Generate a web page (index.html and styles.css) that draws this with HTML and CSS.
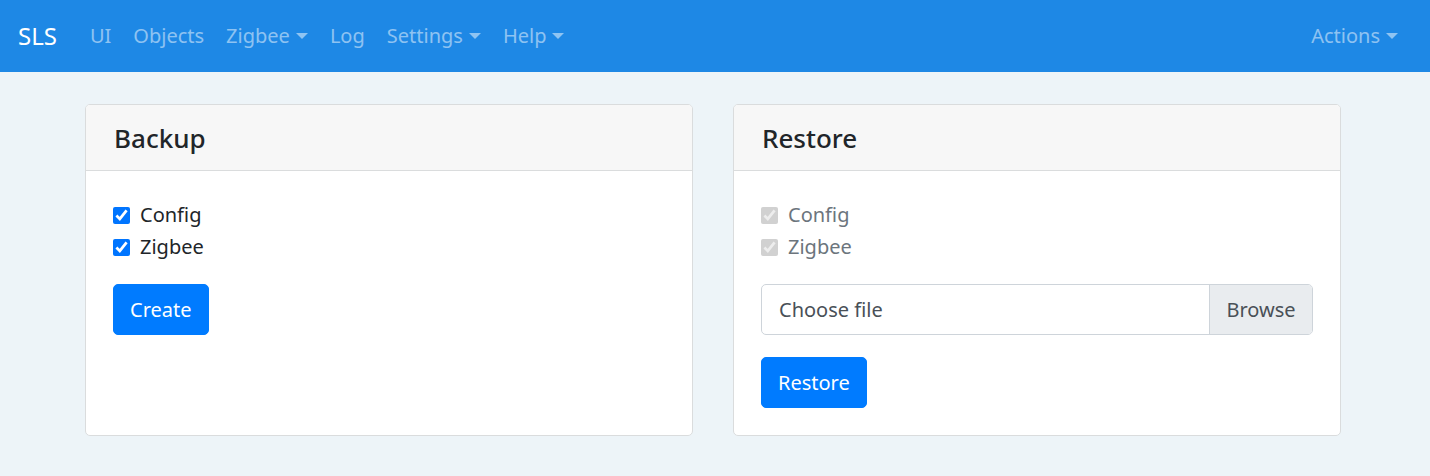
FILE: index.html
```html
<!DOCTYPE html>
<html lang="en">
<head>
<meta charset="utf-8">
<title>SLS Backup</title>
<link rel="stylesheet" href="styles.css">
</head>
<body>
<nav class="navbar">
  <a class="brand" href="#">SLS</a>
  <ul class="nav">
    <li><a class="nav-link" href="#">UI</a></li>
    <li><a class="nav-link" href="#">Objects</a></li>
    <li><a class="nav-link dropdown" href="#">Zigbee</a></li>
    <li><a class="nav-link" href="#">Log</a></li>
    <li><a class="nav-link dropdown" href="#">Settings</a></li>
    <li><a class="nav-link dropdown" href="#">Help</a></li>
  </ul>
  <ul class="nav nav-right">
    <li><a class="nav-link dropdown" href="#">Actions</a></li>
  </ul>
</nav>
<main class="content">
  <section class="card">
    <div class="card-header">Backup</div>
    <div class="card-body">
      <label class="check"><input type="checkbox" checked><span>Config</span></label>
      <label class="check"><input type="checkbox" checked><span>Zigbee</span></label>
      <button class="btn" type="button">Create</button>
    </div>
  </section>
  <section class="card">
    <div class="card-header">Restore</div>
    <div class="card-body">
      <label class="check disabled"><input type="checkbox" checked disabled><span>Config</span></label>
      <label class="check disabled"><input type="checkbox" checked disabled><span>Zigbee</span></label>
      <div class="file-input">
        <span class="file-label">Choose file</span>
        <span class="file-browse">Browse</span>
      </div>
      <button class="btn" type="button">Restore</button>
    </div>
  </section>
</main>
</body>
</html>
```
FILE: styles.css
```css
* { box-sizing: border-box; }
html, body { margin: 0; padding: 0; }
body {
  background: #edf4f8;
  font-family: "Noto Sans", "Open Sans", sans-serif;
  font-size: 20px;
  line-height: 32px;
  color: #212529;
}
.navbar {
  height: 72px;
  background: #1e88e5;
  display: flex;
  align-items: center;
  padding: 0 20px 0 18px;
}
.brand {
  color: #fff;
  text-decoration: none;
  font-size: 24px;
  margin-right: 22px;
}
.nav {
  list-style: none;
  margin: 0;
  padding: 0;
  display: flex;
}
.nav-right { margin-left: auto; }
.nav-link {
  display: block;
  color: rgba(255,255,255,0.5);
  text-decoration: none;
  padding: 0 11px;
}
.nav-right .nav-link { padding-right: 12px; }
.dropdown::after {
  content: "";
  display: inline-block;
  margin-left: 6px;
  vertical-align: 4px;
  border-top: 6px solid;
  border-left: 6px solid transparent;
  border-right: 6px solid transparent;
}
.content {
  display: grid;
  grid-template-columns: 608px 608px;
  gap: 40px;
  padding: 32px 0 0 85px;
}
.card {
  background: #fff;
  border: 1px solid #dadcdd;
  border-radius: 5px;
  overflow: hidden;
  display: flex;
  flex-direction: column;
}
.card-header {
  height: 66px;
  background: #f7f7f7;
  border-bottom: 1px solid #dadcdd;
  padding: 0 28px;
  font-size: 26px;
  font-weight: 500;
  display: flex;
  align-items: center;
}
.card-body {
  padding: 28px 27px 27px;
  display: flex;
  flex-direction: column;
  align-items: flex-start;
}
.check {
  display: flex;
  align-items: center;
  height: 32px;
}
.check input {
  width: 17px;
  height: 17px;
  margin: 0 10px 0 0;
}
.check.disabled span { color: #6c757d; }
.check + .btn, .check + .file-input { margin-top: 21px; }
.btn {
  font-family: inherit;
  font-size: 20px;
  height: 51px;
  padding: 0 16px;
  border: 1px solid #007bff;
  background: #007bff;
  color: #fff;
  border-radius: 5px;
}
.file-input {
  width: 552px;
  height: 51px;
  border: 1px solid #ced4da;
  border-radius: 5px;
  display: flex;
  overflow: hidden;
  color: #495057;
  margin-bottom: 22px;
}
.file-label {
  flex: 1;
  display: flex;
  align-items: center;
  padding: 0 17px;
}
.file-browse {
  width: 103px;
  background: #e9ecef;
  border-left: 1px solid #ced4da;
  display: flex;
  align-items: center;
  justify-content: center;
}
```
